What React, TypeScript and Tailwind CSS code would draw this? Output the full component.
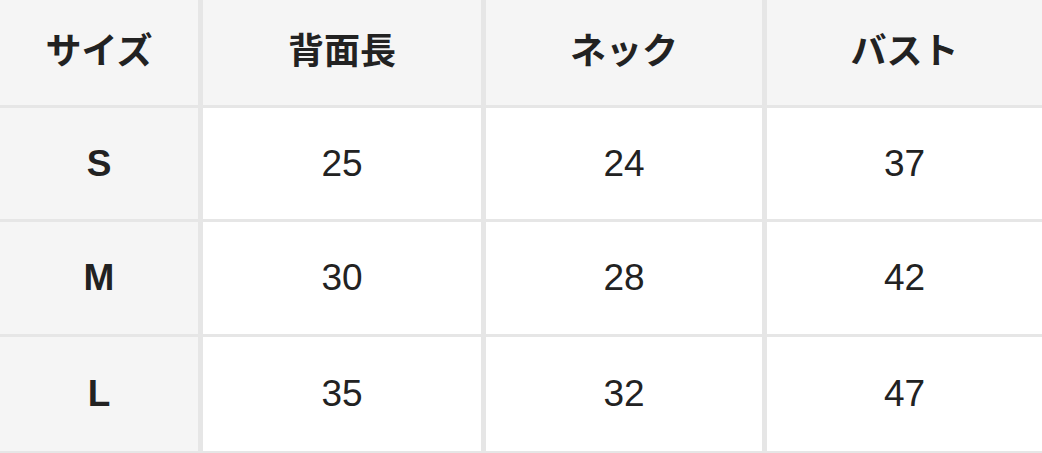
import React from "react";

const headers = ["サイズ", "背面長", "ネック", "バスト"];
const rows = [
  ["S", "25", "24", "37"],
  ["M", "30", "28", "42"],
  ["L", "35", "32", "47"],
];

export default function App() {
  return (
    <div className="w-[1042px] h-[453px] overflow-hidden bg-white">
      <div
        className="grid grid-cols-[198px_278px_276px_1fr] grid-rows-[105px_111px_112px_114px] gap-x-[5px] gap-y-[3px] bg-[#e6e6e6] border-b-2 border-[#e6e6e6] text-[#222222]"
        style={{}}
      >
        {headers.map((h) => (
          <div
            key={h}
            className="bg-[#f5f5f5] flex items-center justify-center pb-[10px] text-[36px] font-bold font-['Noto_Sans_CJK_JP','Noto_Sans',sans-serif]"
          >
            {h}
          </div>
        ))}
        {rows.map((r) =>
          r.map((c, i) => (
            <div
              key={r[0] + i}
              className={
                i === 0
                  ? "bg-[#f5f5f5] flex items-center justify-center text-[37px] font-bold font-['Liberation_Sans',Arial,sans-serif]"
                  : "bg-white flex items-center justify-center text-[37px] font-['Liberation_Sans',Arial,sans-serif]"
              }
            >
              {c}
            </div>
          ))
        )}
      </div>
    </div>
  );
}
